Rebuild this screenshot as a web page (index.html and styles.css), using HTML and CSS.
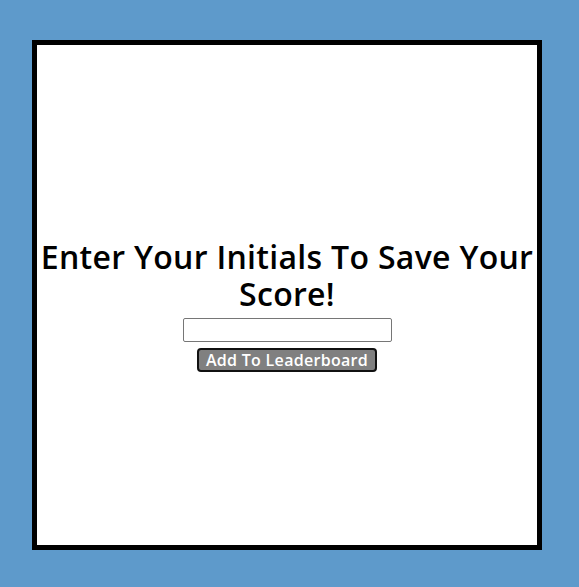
FILE: index.html
```html
<!DOCTYPE html>
<html>
<head>
<meta charset="utf-8">
<link rel="stylesheet" href="styles.css">
</head>
<body>
<main class="card">
  <h1 class="title">Enter Your Initials To Save Your Score!</h1>
  <form class="form">
    <input class="initials" type="text">
    <button class="submit" type="button">Add To Leaderboard</button>
  </form>
</main>
</body>
</html>
```
FILE: styles.css
```css
html, body {
  margin: 0;
  padding: 0;
}
body {
  background: #5e9acb;
  width: 579px;
  height: 587px;
  font-family: "Open Sans", "DejaVu Sans", sans-serif;
}
.card {
  box-sizing: border-box;
  margin: 40px 0 0 32px;
  width: 510px;
  height: 510px;
  border: 5px solid #000;
  background: #fff;
  display: flex;
  flex-direction: column;
  align-items: center;
  justify-content: center;
  padding-top: 20px;
}
.title {
  margin: 0 0 6px;
  font-size: 32px;
  font-weight: 600;
  line-height: 37px;
  text-align: center;
  color: #000;
  letter-spacing: 0.3px;
}
.form {
  display: flex;
  flex-direction: column;
  align-items: center;
  gap: 6px;
}
.initials {
  box-sizing: border-box;
  width: 209px;
  height: 24px;
  border: 1px solid #767676;
  border-radius: 2px;
  padding: 1px 2px;
  margin: 0;
}
.submit {
  box-sizing: border-box;
  width: 180px;
  height: 24px;
  margin: 0;
  padding: 0;
  background: #808080;
  color: #fff;
  border: 2px solid #111;
  border-radius: 4px;
  font-family: "Open Sans", "DejaVu Sans", sans-serif;
  font-weight: 600;
  font-size: 16px;
  line-height: 18px;
  letter-spacing: 0.3px;
}
```
